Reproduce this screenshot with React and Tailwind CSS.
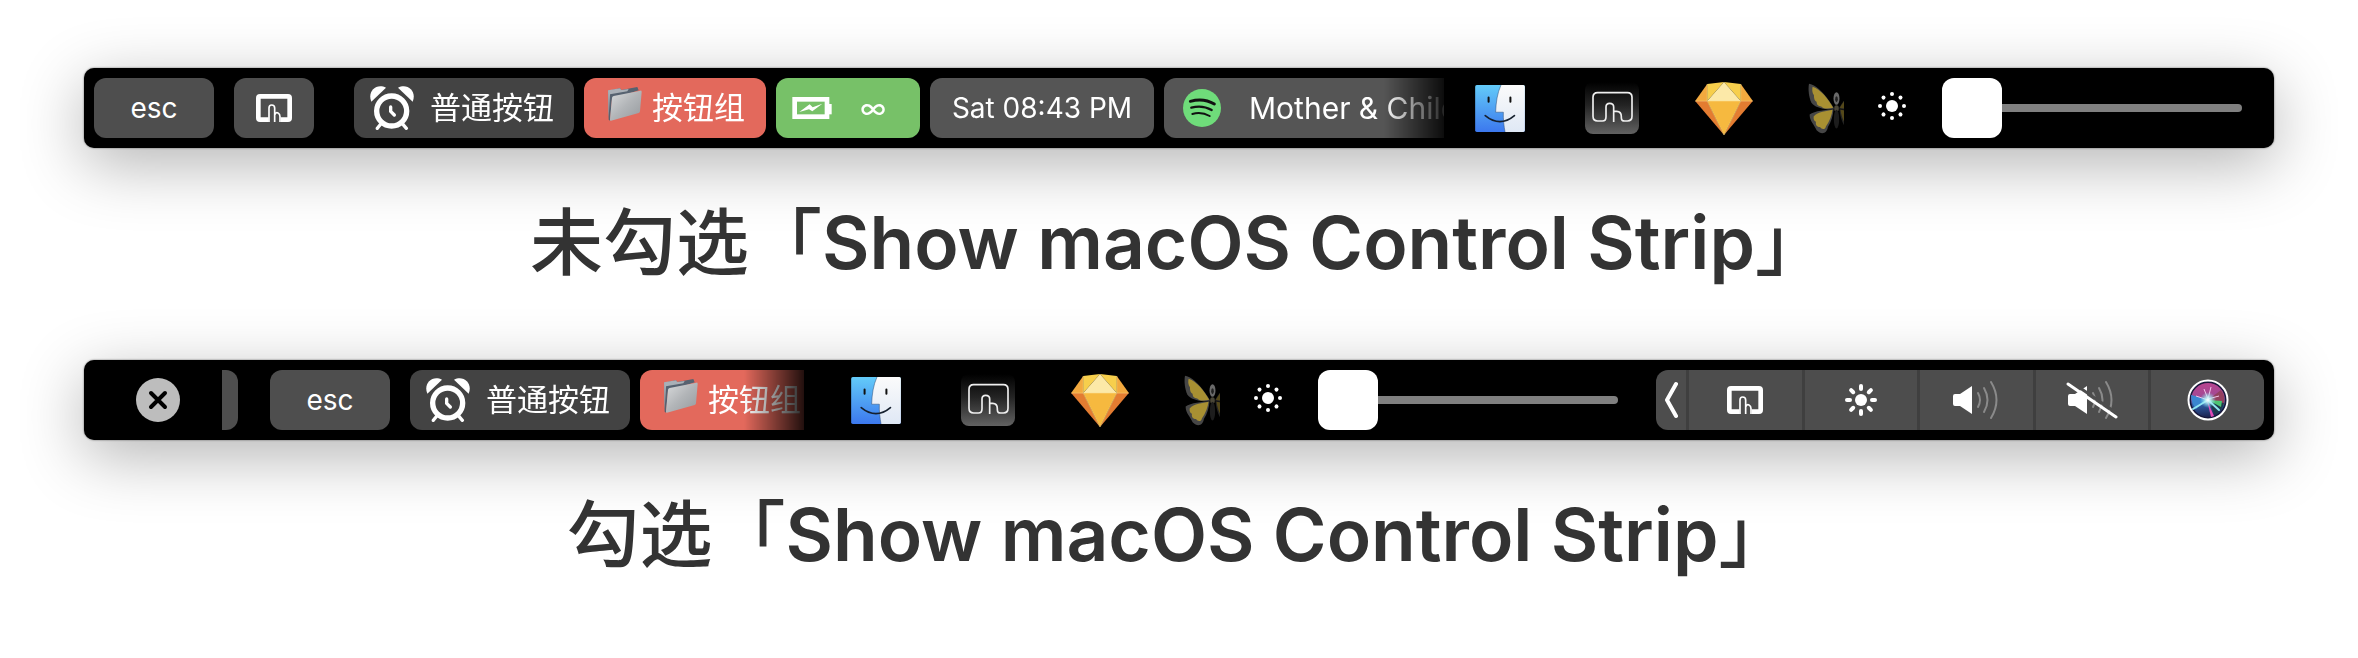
import React, { useState } from 'react';

function TouchIcon({ className }) {
  return (
    <svg viewBox="0 0 108 84" className={className} fill="none" stroke="#fff" aria-hidden="true">
      <path d="M38 77H12Q7 77 7 72V12Q7 7 12 7H96Q101 7 101 12V72Q101 77 96 77H74" strokeWidth="14" />
      <path d="M39 84V42Q39 33 47 33Q56 33 56 42V84" strokeWidth="5" />
      <path d="M56 62Q60 54 66 57Q72 60 72 68V84" strokeWidth="5" />
    </svg>
  );
}

function AlarmIcon() {
  return (
    <svg viewBox="0 0 130 132" className="h-11 w-11 shrink-0" fill="#fff" aria-hidden="true">
      <path d="M3 47C-10 16 18 -10 47 5Z" />
      <path d="M127 47C140 16 112 -10 83 5Z" />
      <circle cx="64" cy="75" r="45" fill="none" stroke="#fff" strokeWidth="16" />
      <path d="M61 63V76L72 87" fill="none" stroke="#fff" strokeWidth="10" strokeLinecap="round" />
      <path d="M32 113L21 127M96 113L108 127" stroke="#fff" strokeWidth="10" strokeLinecap="round" />
    </svg>
  );
}

function FolderIcon({ id }) {
  return (
    <svg viewBox="0 0 102 102" className="mb-2 h-[34px] w-[34px] shrink-0" aria-hidden="true">
      <defs>
        <linearGradient id={id} x1="0" y1="0" x2="1" y2="1">
          <stop offset="0" stopColor="#dadcdd" />
          <stop offset="0.5" stopColor="#b2b5b8" />
          <stop offset="1" stopColor="#959a9e" />
        </linearGradient>
      </defs>
      <path d="M0 11L36 4L40 9L88 0L92 10L12 36L6 101L2 98Z" fill="#566270" />
      <path d="M0 10L36 4L40 9L62 6L58 13L6 22L2 90Z" fill="#a9b0b7" />
      <path d="M12 33Q12 28 17 27L97 11Q101 10 101 15L96 73Q96 77 92 78L9 101Q5 102 6 97Z" fill={`url(#${id})`} />
    </svg>
  );
}

function BatteryIcon() {
  return (
    <svg viewBox="0 0 118 66" className="h-[22px] w-10 shrink-0" aria-hidden="true">
      <rect x="7" y="7" width="97" height="52" fill="none" stroke="#fff" strokeWidth="14" />
      <rect x="108" y="21" width="10" height="31" fill="#fff" />
      <path d="M21 45L52 22L61 31L90 20L60 43L50 37Z" fill="#fff" />
    </svg>
  );
}

function SpotifyIcon() {
  return (
    <svg viewBox="0 0 114 114" className="h-[38px] w-[38px] shrink-0" fill="none" stroke="#111" strokeLinecap="round" aria-hidden="true">
      <circle cx="57" cy="57" r="57" fill="#6fdc7a" stroke="none" />
      <path d="M22 37Q62 26 94 45" strokeWidth="9" />
      <path d="M25 56Q58 47 86 63" strokeWidth="7" />
      <path d="M28 75Q55 67 80 81" strokeWidth="6" />
    </svg>
  );
}

function FinderIcon({ id }) {
  return (
    <svg viewBox="0 0 148 140" className="h-[47px] w-[50px]" aria-hidden="true">
      <defs>
        <linearGradient id={`${id}-l`} x1="0" y1="0" x2="0" y2="1">
          <stop offset="0" stopColor="#63cbf9" />
          <stop offset="1" stopColor="#3c78ee" />
        </linearGradient>
        <linearGradient id={`${id}-r`} x1="0" y1="0" x2="0" y2="1">
          <stop offset="0" stopColor="#fbfbfb" />
          <stop offset="1" stopColor="#dfe8f5" />
        </linearGradient>
      </defs>
      <rect width="148" height="140" rx="5" fill={`url(#${id}-l)`} />
      <path d="M77 0C66 24 62 52 61 81H84C83 100 86 124 89 140H143Q148 140 148 135V5Q148 0 143 0Z" fill={`url(#${id}-r)`} />
      <path d="M77 0C66 24 62 52 61 81H84C83 100 86 124 89 140" fill="none" stroke="#2b4a72" strokeWidth="1.5" />
      <path d="M40 37V50M105 37V50" stroke="#111" strokeWidth="6" strokeLinecap="round" />
      <path d="M30 91Q74 127 117 91" fill="none" stroke="#16202e" strokeWidth="5" strokeLinecap="round" />
    </svg>
  );
}

function BttIcon({ id }) {
  return (
    <svg viewBox="0 0 162 156" className="h-[52px] w-[54px]" aria-hidden="true">
      <defs>
        <linearGradient id={id} x1="0" y1="0" x2="0" y2="1">
          <stop offset="0" stopColor="#000" />
          <stop offset="0.45" stopColor="#242424" />
          <stop offset="1" stopColor="#626262" />
        </linearGradient>
      </defs>
      <rect width="162" height="156" rx="24" fill={`url(#${id})`} />
      <path
        d="M86 120V75Q86 64 74 64Q63 64 63 75V104Q63 117 52 117H38Q24 117 24 103V46Q24 32 38 32H127Q141 32 141 46V103Q141 117 127 117H119Q109 117 109 107V104Q109 88 95 88H86"
        fill="none"
        stroke="#efefef"
        strokeWidth="5"
      />
    </svg>
  );
}

function SketchIcon() {
  return (
    <svg viewBox="0 0 172 158" className="h-[53px] w-[58px]" aria-hidden="true">
      <path d="M36 6L0 57H36Z" fill="#f2a93f" />
      <path d="M136 6L172 57H136Z" fill="#f2a93f" />
      <path d="M86 0L36 6V57Z" fill="#f7cf4c" />
      <path d="M86 0L136 6V57Z" fill="#f7cf4c" />
      <path d="M86 0L36 57H136Z" fill="#fce9a8" />
      <path d="M0 57H36L86 158Z" fill="#e37c31" />
      <path d="M172 57H136L86 158Z" fill="#e37c31" />
      <path d="M36 57H136L86 158Z" fill="#f6b93f" />
      <path d="M36 6V57L86 158L136 57V6M0 57H172" fill="none" stroke="#fbd98a" strokeWidth="1.5" />
    </svg>
  );
}

function ButterflyWing({ transform }) {
  return (
    <g transform={transform}>
      <path d="M3 1C34 6 66 54 79 76C54 82 20 74 10 58C2 40 0 16 3 1Z" fill="#464646" />
      <path d="M14 10C38 16 64 52 76 74C56 78 44 76 40 70C30 70 26 64 26 56C18 52 18 42 18 36C12 28 12 18 14 10Z" fill="#a89032" />
      <path d="M77 78C56 80 20 82 5 94C4 114 20 126 26 142C42 158 58 150 60 132C70 116 76 96 77 78Z" fill="#464646" />
      <path d="M74 80C56 84 30 86 17 100C16 110 20 114 24 116C22 126 28 132 36 132C42 140 52 140 54 130C66 114 72 96 74 80Z" fill="#a89032" />
    </g>
  );
}

function ButterflyIcon() {
  return (
    <svg viewBox="0 0 172 152" className="h-[51px] w-[57px]" aria-hidden="true">
      <ButterflyWing />
      <g opacity="0.5">
        <ButterflyWing transform="translate(172 0) scale(-1 1)" />
      </g>
      <ellipse cx="86" cy="46" rx="9" ry="19" fill="#6a6a6a" />
      <ellipse cx="86" cy="48" rx="4" ry="9" fill="#222" />
      <ellipse cx="86" cy="76" rx="7" ry="10" fill="#4a4637" />
      <ellipse cx="86" cy="108" rx="8" ry="28" fill="#1d1d1d" />
    </svg>
  );
}

const ANGLES = [0, 45, 90, 135, 180, 225, 270, 315];

function DotSunIcon() {
  return (
    <svg viewBox="0 0 28 32" className="h-8 w-7 shrink-0" fill="#fff" aria-hidden="true">
      <circle cx="14" cy="14" r="6" />
      {ANGLES.map((a) => (
        <circle key={a} cx="26" cy="14" r="2" transform={`rotate(${a} 14 14)`} />
      ))}
    </svg>
  );
}

function SunIcon() {
  return (
    <svg viewBox="0 0 32 32" className="h-8 w-8" fill="#fff" aria-hidden="true">
      <circle cx="16" cy="16" r="6" />
      {ANGLES.map((a) => (
        <path key={a} d="M27 16H30" stroke="#fff" strokeWidth="4" strokeLinecap="round" transform={`rotate(${a} 16 16)`} />
      ))}
    </svg>
  );
}

function SpeakerIcon() {
  return (
    <svg viewBox="0 0 48 40" className="h-10 w-12" fill="none" aria-hidden="true">
      <path d="M1 16Q1 14 3 14H8L20 6V34L8 26H3Q1 26 1 24Z" fill="#fff" />
      <g stroke="#8a8a8a" strokeWidth="2" strokeLinecap="round">
        <path d="M26 13Q30 20 26 27" />
        <path d="M32 8Q39 20 32 32" />
        <path d="M39 2Q50 20 39 38" />
      </g>
    </svg>
  );
}

function MuteIcon() {
  return (
    <svg viewBox="0 0 52 40" className="h-10 w-[52px]" fill="none" aria-hidden="true">
      <path d="M2 16Q2 14 4 14H9L21 6V34L9 26H4Q2 26 2 24Z" fill="#fff" />
      <g stroke="#8a8a8a" strokeWidth="2" strokeLinecap="round">
        <path d="M27 13Q31 20 27 27" />
        <path d="M33 8Q40 20 33 32" />
        <path d="M40 2Q51 20 40 38" />
      </g>
      <path d="M4 1L52 34" stroke="#4d4d4d" strokeWidth="3" />
      <path d="M2 4L50 37" stroke="#fff" strokeWidth="3" strokeLinecap="round" />
    </svg>
  );
}

function SiriIcon() {
  return (
    <svg viewBox="0 0 42 42" className="h-[42px] w-[42px]" aria-hidden="true">
      <defs>
        <linearGradient id="siri-bg" x1="0.4" y1="0" x2="0.5" y2="1">
          <stop offset="0" stopColor="#b9438f" />
          <stop offset="0.4" stopColor="#a14a95" />
          <stop offset="0.6" stopColor="#2f5fa8" />
          <stop offset="1" stopColor="#1c2350" />
        </linearGradient>
        <radialGradient id="siri-glow">
          <stop offset="0" stopColor="#fff" />
          <stop offset="0.4" stopColor="#b8f2f5" stopOpacity="0.8" />
          <stop offset="1" stopColor="#7fe0f0" stopOpacity="0" />
        </radialGradient>
      </defs>
      <circle cx="21" cy="21" r="19.5" fill="#17173a" stroke="#fff" strokeWidth="2" />
      <circle cx="21" cy="21" r="17" fill="url(#siri-bg)" />
      <path d="M21 21L34 11Q39 18 37 26Z" fill="#93405f" />
      <path d="M21 21L37 24Q35 32 28 36Z" fill="#1f3a4c" />
      <path d="M21 21L35 22L34 28Z" fill="#4cc472" />
      <path d="M21 20L4 16Q4 24 9 30Z" fill="#3a86d0" />
      <path d="M20 21L24 38L27 37Z" fill="#e04bb5" />
      <path d="M21 21L6 30M21 21L32 31" stroke="#8fe6f2" strokeWidth="2" strokeLinecap="round" />
      <path d="M21 20L17 10M21 20L24 8M21 20L32 17M21 21L9 17" stroke="#f3c4ea" strokeWidth="1" />
      <circle cx="21" cy="21" r="8" fill="url(#siri-glow)" />
    </svg>
  );
}

function Key({ className, children, ...props }) {
  return (
    <button type="button" className={`flex h-[60px] shrink-0 items-center rounded-xl text-[28px] leading-8 text-white ${className}`} {...props}>
      {children}
    </button>
  );
}

function EscKey() {
  return <Key className="w-[120px] justify-center bg-[#4e4e4e]">esc</Key>;
}

function NormalKey() {
  return (
    <Key className="w-[220px] gap-4 bg-[#434343] pl-4">
      <AlarmIcon />
      <span className="text-[31px]">普通按钮</span>
    </Key>
  );
}

function GroupKey({ id }) {
  return (
    <Key className="w-[182px] gap-2.5 bg-[#e3695c] pl-6">
      <FolderIcon id={id} />
      <span className="text-[31px] whitespace-nowrap">按钮组</span>
    </Key>
  );
}

function Scroller({ className, children }) {
  return (
    <div
      className={`flex min-w-0 flex-1 overflow-hidden [mask-image:linear-gradient(to_right,#000_calc(100%-60px),rgba(0,0,0,0.15))] ${className}`}
    >
      {children}
    </div>
  );
}

function Dock({ id }) {
  const apps = [
    { name: 'Finder', icon: <FinderIcon id={`${id}-finder`} /> },
    { name: 'BetterTouchTool', icon: <BttIcon id={`${id}-btt`} /> },
    { name: 'Sketch', icon: <SketchIcon /> },
    { name: 'Butterfly', icon: <ButterflyIcon /> },
  ];
  return (
    <div className="flex w-[400px] shrink-0 overflow-hidden">
      {apps.map((app) => (
        <button key={app.name} type="button" aria-label={app.name} className="flex h-[60px] w-28 shrink-0 items-center justify-center">
          {app.icon}
        </button>
      ))}
    </div>
  );
}

function Brightness() {
  const [value, setValue] = useState(0);
  return (
    <label className="ml-[34px] flex shrink-0 items-center gap-9">
      <DotSunIcon />
      <input
        type="range"
        min="0"
        max="100"
        value={value}
        onChange={(e) => setValue(e.target.value)}
        aria-label="Brightness"
        className="h-[60px] w-[300px] appearance-none bg-transparent [&::-webkit-slider-runnable-track]:h-2 [&::-webkit-slider-runnable-track]:rounded-full [&::-webkit-slider-runnable-track]:bg-[#808080] [&::-webkit-slider-thumb]:-mt-[26px] [&::-webkit-slider-thumb]:h-[60px] [&::-webkit-slider-thumb]:w-[60px] [&::-webkit-slider-thumb]:appearance-none [&::-webkit-slider-thumb]:rounded-xl [&::-webkit-slider-thumb]:bg-white"
      />
    </label>
  );
}

function ControlStrip() {
  const items = [
    { name: 'BetterTouchTool', icon: <TouchIcon className="h-7 w-9" /> },
    { name: 'Brightness', icon: <SunIcon /> },
    { name: 'Volume', icon: <SpeakerIcon /> },
    { name: 'Mute', icon: <MuteIcon /> },
    { name: 'Siri', icon: <SiriIcon /> },
  ];
  return (
    <div className="mr-2.5 ml-[38px] flex h-[60px] w-[608px] shrink-0 overflow-hidden rounded-xl bg-[#4d4d4d]">
      <button type="button" aria-label="Expand" className="flex w-[30px] shrink-0 items-center justify-center">
        <svg viewBox="0 0 14 38" className="h-[38px] w-3.5" fill="none" stroke="#fff" strokeWidth="4" strokeLinecap="round" strokeLinejoin="round" aria-hidden="true">
          <path d="M12 3L3 19L12 35" />
        </svg>
      </button>
      {items.map((item) => (
        <button key={item.name} type="button" aria-label={item.name} className="flex flex-1 items-center justify-center border-l-[3px] border-[#3f3f3f]">
          {item.icon}
        </button>
      ))}
    </div>
  );
}

function TouchBar({ prefix, children }) {
  return (
    <figure>
      <div className="mx-[84px] flex h-20 items-center rounded-[10px] bg-black shadow-[0_0_2px_rgba(0,0,0,0.6),0_16px_64px_rgba(0,0,0,0.3)]">
        {children}
      </div>
      <figcaption className="relative mt-[50px] h-[98px] text-center text-[73px] leading-[90px] font-medium whitespace-nowrap text-[#333]">
        {prefix}「<span className="font-semibold">Show macOS Control Strip</span>」
      </figcaption>
    </figure>
  );
}

export default function App() {
  return (
    <main className="flex flex-col gap-16 overflow-hidden bg-white pt-[68px] font-['Inter','Noto_Sans_CJK_SC',sans-serif]">
      <TouchBar prefix="未勾选">
        <Scroller className="gap-2.5 pl-2.5">
          <EscKey />
          <Key className="mr-[30px] ml-2.5 w-20 justify-center bg-[#4e4e4e]" aria-label="BetterTouchTool">
            <TouchIcon className="h-7 w-9" />
          </Key>
          <NormalKey />
          <GroupKey id="folder-a" />
          <Key className="w-36 gap-7 bg-[#77c168] pl-4">
            <BatteryIcon />
            <span>∞</span>
          </Key>
          <Key className="w-[224px] justify-center bg-[#555]">Sat 08:43 PM</Key>
          <Key className="w-[340px] gap-7 bg-[#555] pl-[19px] whitespace-nowrap">
            <SpotifyIcon />
            <span className="text-[30px]">Mother &amp; Child</span>
          </Key>
        </Scroller>
        <Dock id="a" />
        <Brightness />
        <div className="w-8 shrink-0" />
      </TouchBar>

      <TouchBar prefix="勾选">
        <button type="button" aria-label="Close" className="mr-[42px] ml-[52px] flex h-11 w-11 shrink-0 items-center justify-center rounded-full bg-[#bdbdbd]">
          <svg viewBox="0 0 20 20" className="h-5 w-5" stroke="#000" strokeWidth="4" strokeLinecap="round" aria-hidden="true">
            <path d="M3 3L17 17M17 3L3 17" />
          </svg>
        </button>
        <Scroller className="mr-4">
          <div className="mr-8 h-[60px] w-4 shrink-0 rounded-r-xl bg-[#4e4e4e]" />
          <div className="flex gap-2.5">
            <EscKey />
            <div className="ml-2.5">
              <NormalKey />
            </div>
            <GroupKey id="folder-b" />
          </div>
        </Scroller>
        <Dock id="b" />
        <Brightness />
        <ControlStrip />
      </TouchBar>
    </main>
  );
}
